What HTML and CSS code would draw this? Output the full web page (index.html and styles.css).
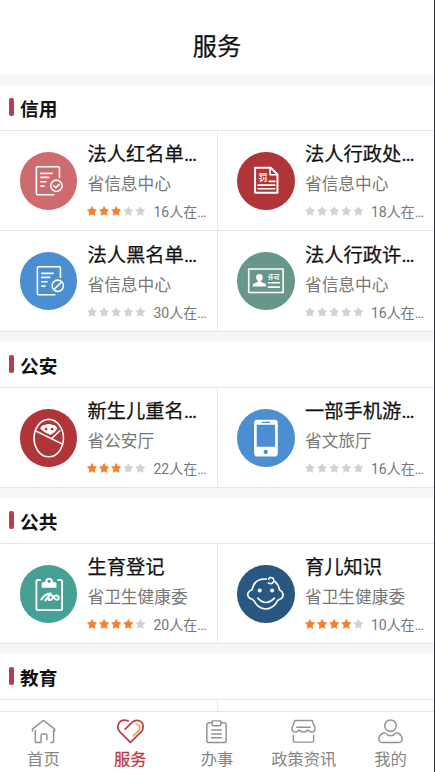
FILE: index.html
```html
<!DOCTYPE html>
<html lang="zh-CN">
<head>
<meta charset="utf-8">
<title>服务</title>
<link rel="stylesheet" href="styles.css">
</head>
<body>
<svg class="defs" width="0" height="0"><defs>
  <g id="star"><path d="M5 0 6.600 3.100 10 3.700 7.600 6.200 8.200 9.800 5 8.200 1.800 9.800 2.400 6.200 0 3.700 3.400 3.100Z"/></g>
  <g id="off"><use href="#star"/><use href="#star" x="12.1"/><use href="#star" x="24.2"/><use href="#star" x="36.3"/><use href="#star" x="48.4"/></g>
  <g id="on3"><use href="#star"/><use href="#star" x="12.1"/><use href="#star" x="24.2"/></g>
  <g id="on4"><use href="#on3"/><use href="#star" x="36.3"/></g>
</defs></svg>
<div class="app">
<header class="header">服务</header>
<main class="content">
  <section class="section">
    <h2 class="heading">信用</h2>
    <div class="grid">
      <article class="card">
        <svg class="icon rose" viewBox="0 0 172 172"><path d="M118 76V48q0-4-4-4H53q-4 0-4 4v76q0 4 4 4h48M62 64h34M62 76h24M62 89h16M62 102h10"/><circle cx="109" cy="101" r="17"/><path d="m101 101 6 6 10-10"/></svg>
        <div class="info"><h3>法人红名单…</h3><p>省信息中心</p><div class="meta"><svg class="stars" viewBox="0 0 60 10"><use href="#off"/><use class="lit" href="#on3"/></svg><span>16人在…</span></div></div>
      </article>
      <article class="card">
        <svg class="icon red" viewBox="0 0 172 172"><path stroke-width="6" d="M95 47H54v75h67V67L101 47H91"/><path d="M99 48v20h20M63 99h50M63 110h50M96 88h17"/><text x="64" y="86" font-size="27">罚</text></svg>
        <div class="info"><h3>法人行政处…</h3><p>省信息中心</p><div class="meta"><svg class="stars" viewBox="0 0 60 10"><use href="#off"/></svg><span>18人在…</span></div></div>
      </article>
      <article class="card">
        <svg class="icon blue" viewBox="0 0 172 172"><path d="M121 76V48q0-4-4-4H56q-4 0-4 4v76q0 4 4 4h48M65 64h34M65 76h24M65 89h16M65 102h10"/><circle cx="113" cy="101" r="17"/><path d="m104 110 18-18"/></svg>
        <div class="info"><h3>法人黑名单…</h3><p>省信息中心</p><div class="meta"><svg class="stars" viewBox="0 0 60 10"><use href="#off"/></svg><span>30人在…</span></div></div>
      </article>
      <article class="card">
        <svg class="icon sage" viewBox="0 0 172 172"><path d="M35 51h103v70H35z"/><path d="M94 92h33M94 105h33"/><path class="solid" d="M57 76a10 10 0 1 1 20 0q0 6-5 10v4l14 5v7H48v-7l14-5v-4q-5-4-5-10ZM47 99h40v4H47z"/><text x="92" y="82" font-size="18">许可</text></svg>
        <div class="info"><h3>法人行政许…</h3><p>省信息中心</p><div class="meta"><svg class="stars" viewBox="0 0 60 10"><use href="#off"/></svg><span>16人在…</span></div></div>
      </article>
    </div>
  </section>
  <section class="section">
    <h2 class="heading">公安</h2>
    <div class="grid">
      <article class="card">
        <svg class="icon red" viewBox="0 0 172 172"><path d="M86 31C60 31 42 59 42 87s17 56 44 56 44-28 44-56-18-56-44-56Z"/><path d="M46 65 127 105M96 87 119 65"/><path class="solid" d="M60 58q5-10 14-10 12-6 24 0 9 0 14 10-6 12-21 20-20-8-31-20Z"/><circle class="eye" cx="78" cy="60" r="4"/><circle class="eye" cx="96" cy="60" r="4"/></svg>
        <div class="info"><h3>新生儿重名…</h3><p>省公安厅</p><div class="meta"><svg class="stars" viewBox="0 0 60 10"><use href="#off"/><use class="lit" href="#on3"/></svg><span>22人在…</span></div></div>
      </article>
      <article class="card">
        <svg class="icon blue" viewBox="0 0 172 172"><path class="solid" fill-rule="evenodd" d="M61 32h51q10 0 10 10v90q0 10-10 10H61q-10 0-10-10V42q0-10 10-10ZM59 47v66h55V47ZM75 38v4h24v-4ZM86 122a6.500 6.500 0 1 0 .1 0Z"/></svg>
        <div class="info"><h3>一部手机游…</h3><p>省文旅厅</p><div class="meta"><svg class="stars" viewBox="0 0 60 10"><use href="#off"/></svg><span>16人在…</span></div></div>
      </article>
    </div>
  </section>
  <section class="section">
    <h2 class="heading">公共</h2>
    <div class="grid">
      <article class="card">
        <svg class="icon teal" viewBox="0 0 172 172"><path stroke-width="5.500" d="M60 45H53q-4 0-4 4v82q0 4 4 4h69q4 0 4-4V49q0-4-4-4h-8"/><path class="solid" fill-rule="evenodd" d="M76 49a11 11 0 1 1 22 0l11 4v15H65V53ZM87 44a5 5 0 1 0 .1 0Z"/><path stroke-width="6" d="M64 103q10-17 28-18L76 106M88 90c14-4 12 15 23 14 8-2 6-14-3-13-11 1-9 14-19 14q-5-1-3-6"/></svg>
        <div class="info"><h3>生育登记</h3><p>省卫生健康委</p><div class="meta"><svg class="stars" viewBox="0 0 60 10"><use href="#off"/><use class="lit" href="#on4"/></svg><span>20人在…</span></div></div>
      </article>
      <article class="card">
        <svg class="icon navy" viewBox="0 0 172 172"><path stroke-width="5" d="M88 42C62 40 49 54 45 74 32 78 27 92 39 100q8 2 11 6c18 34 54 34 72 0q4-4 11-6c9-9 5-20-6-26-2-11-6-18-13-24M94 54q10 5 15-3c5-13-11-18-14-9"/><path d="M62 99q24 26 50 0"/><circle class="solid" cx="68" cy="76" r="6"/><circle class="solid" cx="105" cy="76" r="6"/></svg>
        <div class="info"><h3>育儿知识</h3><p>省卫生健康委</p><div class="meta"><svg class="stars" viewBox="0 0 60 10"><use href="#off"/><use class="lit" href="#on4"/></svg><span>10人在…</span></div></div>
      </article>
    </div>
  </section>
  <section class="section">
    <h2 class="heading">教育</h2>
    <div class="grid"><div class="card"></div><div class="card"></div></div>
  </section>
</main>
<nav class="tabs">
  <a class="tab"><svg viewBox="0 0 28 28"><path d="M5.500 13v11q0 1.500 1.500 1.500h4.500V18q0-1.500 1.500-1.500h3q1.500 0 1.500 1.500v4.500M21.500 25.500q3 0 3-2V13M2.500 13.500v-2L14 2.500l11.500 9v2"/></svg><span>首页</span></a>
  <a class="tab active"><svg viewBox="0 0 28 28"><path d="M8.500 11.500 14 6.200C20-.5 27.500 3 27 9.500q0 3-2 5L14 25.200 3 14.500C-1.500 9 2 2 8 2.200q2 0 3.500 1"/><path class="shine" d="M20 6.500q5 1 3 6L17 18.500"/></svg><span>服务</span></a>
  <a class="tab"><svg viewBox="0 0 28 28"><path d="M9 5H6.500Q4 5 4 7v16.500q0 2 2 2h16q2 0 2-2V7q0-2-2-2H19M9.500 3h9v3.500q0 1.500-1.500 1.500h-6q-1.500 0-1.500-1.500ZM9 12.500h10M9 16.500h10M9 20.500h10"/></svg><span>办事</span></a>
  <a class="tab"><svg viewBox="0 0 28 28"><path d="M5 2.500h18l3 8q0 4-3.500 4-2.500 0-4-2-1.800 2-4.500 2t-4.500-2q-1.500 2-4 2-3.500 0-3.500-4ZM7 9.500h14M3.500 18v5.500q0 1.500 1.500 1.500h18q1.500 0 1.500-1.500V18"/></svg><span>政策资讯</span></a>
  <a class="tab"><svg viewBox="0 0 28 28"><circle cx="14" cy="8" r="6"/><path d="M8.500 15.500Q4 15 2 20.500 1 25.500 6 25.500h16q5 0 4-5Q24 15 19.500 15.500q-2.500 3-5.500 3-2.500 0-4-2"/></svg><span>我的</span></a>
</nav>
</div>
</body>
</html>
```

FILE: styles.css
```css
* { box-sizing: border-box; margin: 0; padding: 0; }
body { font-family: Roboto, "Noto Sans CJK SC", sans-serif; background: #fff; overflow: hidden; }
.defs { display: block; }
.app { width: 435px; height: 772px; display: flex; flex-direction: column; border-right: 1px solid #34363a; overflow: hidden; }
.header { height: 75px; flex: none; padding-top: 19px; line-height: 56px; text-align: center; font-size: 24.2px; color: #111; -webkit-text-stroke: .25px #111; }
.content { flex: 1; min-height: 0; overflow: hidden; background: #f7f7f8; padding-top: 10px; display: flex; flex-direction: column; gap: 10px; }
.section { flex: none; background: #fff; }
.heading { height: 45px; display: flex; align-items: center; gap: 6px; padding: 0 0 1px 9px; font-size: 18.7px; font-weight: 700; color: #111; }
.heading::before { content: ""; width: 5px; height: 18px; border-radius: 2px; background: #b3404a; }
.grid { display: grid; grid-template-columns: 218px 216px; border-top: 1px solid #e7e7e8; }
.card { height: 100px; display: flex; padding-left: 19.5px; border-bottom: 1px solid #e7e7e8; overflow: hidden; }
.card:nth-child(odd) { border-right: 1px solid #e9e9ea; }
.card:nth-child(even) { padding-left: 19px; }
.card:nth-child(n+3) { height: 101px; }
.icon { width: 57.500px; height: 57.500px; margin-top: 21px; flex: none; border-radius: 50%; fill: none; stroke: #fff; stroke-width: 4.800; stroke-linecap: round; stroke-linejoin: round; }
.icon text { fill: #fff; stroke: none; font-weight: 700; }
.solid { fill: #fff; stroke: none; }
.eye { fill: #b13438; stroke: none; }
.rose { background: #cd6b6e; }
.red { background: #b13438; }
.blue { background: #4b8fd2; }
.sage { background: #67968b; }
.teal { background: #46a194; }
.navy { background: #285782; }
.info { padding: 9px 0 0 10.500px; white-space: nowrap; }
.card:nth-child(n+3) .info { padding-top: 10px; }
.info h3 { font-size: 19.300px; line-height: 30px; font-weight: 400; color: #111; -webkit-text-stroke: .25px #111; }
.info p { font-size: 16.700px; line-height: 30px; color: #777; }
.meta { display: flex; align-items: center; height: 21px; font-size: 14px; color: #777; }
.stars { width: 60px; height: 10px; margin: 1px 6.500px 0 -.5px; fill: #d2d2d4; }
.lit { fill: #fa7f2b; }
.tabs { flex: none; height: 61px; display: grid; grid-template-columns: repeat(5, 1fr); border-top: 1px solid #e4e4e4; background: #fff; }
.tab { display: flex; flex-direction: column; align-items: center; height: 55px; overflow: hidden; padding-top: 6px; font-size: 16.300px; color: #858585; }
.tab svg { width: 27px; height: 27px; flex: none; fill: none; stroke: #929292; stroke-width: 1.500; stroke-linecap: round; stroke-linejoin: round; }
.tab span { line-height: 26px; height: 26px; flex: none; margin-top: 2px; white-space: nowrap; }
.tab.active { color: #c0343f; -webkit-text-stroke: .25px #c0343f; }
.tab.active svg { stroke: #bd3c46; stroke-width: 1.800; }
.tab .shine { stroke: #f0a44c; }
```
